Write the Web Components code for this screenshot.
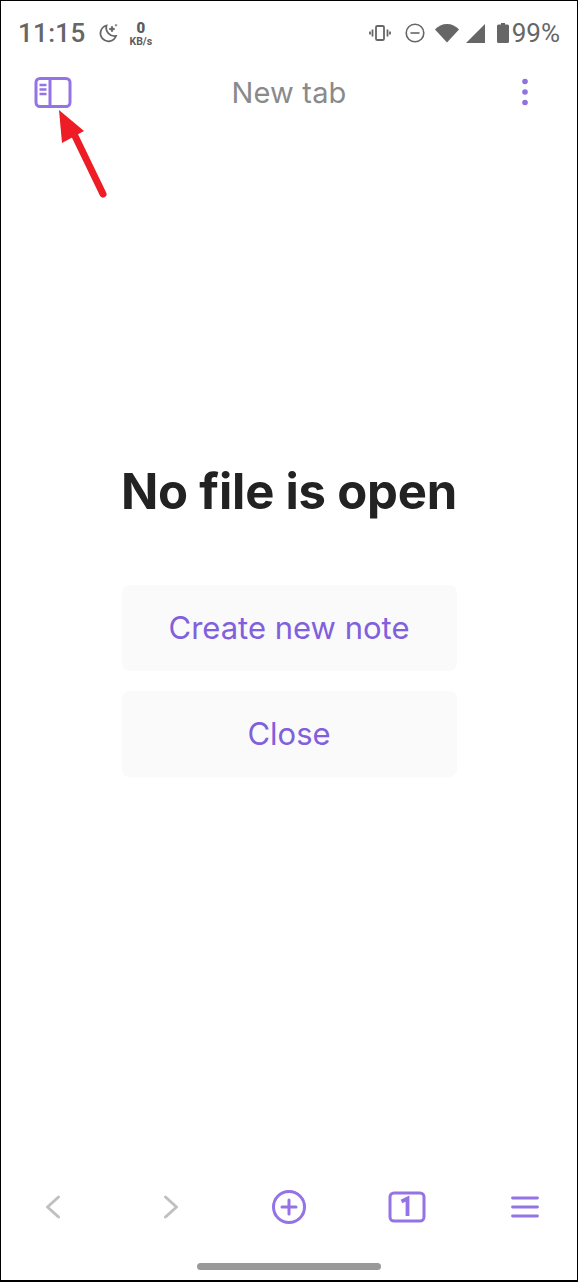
<!DOCTYPE html>
<html lang="en">
<head>
<meta charset="utf-8">
<title>New tab</title>
<style>
    html, body { margin: 0; padding: 0; background: #fff; }
    body { font-family: "Inter", "Liberation Sans", sans-serif; }
</style>
</head>
<body>
<app-shell>
    <status-bar slot="status"></status-bar>
    <top-bar slot="top" title="New tab"></top-bar>
    <empty-state slot="main" heading="No file is open">
        <action-button>Create new note</action-button>
        <action-button>Close</action-button>
    </empty-state>
    <bottom-bar slot="bottom"></bottom-bar>
    <home-indicator slot="home"></home-indicator>
    <red-arrow slot="overlay"></red-arrow>
</app-shell>

<script>
class AppShell extends HTMLElement {
    constructor() {
        super();
        this.attachShadow({ mode: 'open' });
        this.shadowRoot.innerHTML = `
            <style>
                :host { display: block; position: relative; width: 578px; height: 1282px; box-sizing: border-box; border: solid #000; border-width: 1px 1px 2px 1px; overflow: hidden; background: #fff; }
                .col { display: flex; flex-direction: column; height: 100%; }
                .grow { flex: 1; min-height: 0; }
            </style>
            <div class="col">
                <slot name="status"></slot>
                <slot name="top"></slot>
                <div class="grow"><slot name="main"></slot></div>
                <slot name="bottom"></slot>
                <slot name="home"></slot>
            </div>
            <slot name="overlay"></slot>
        `;
    }
}

class StatusBar extends HTMLElement {
    constructor() {
        super();
        this.attachShadow({ mode: 'open' });
        this.shadowRoot.innerHTML = `
            <style>
                :host { display: flex; align-items: center; justify-content: space-between; height: 64px; padding: 0 17px 0 17px; color: #666; font-family: "Roboto", sans-serif; }
                .side { display: flex; align-items: center; }
                .time { font-size: 26px; font-weight: 500; letter-spacing: .3px; margin-right: 13px; }
                .speed { display: flex; flex-direction: column; align-items: center; margin-left: 11px; font-weight: 700; color: #5c5c5c; }
                .speed b { font-size: 15px; line-height: 18px; }
                .speed span { font-size: 10.500px; line-height: 12px; margin-top: -1px; }
                .pct { font-size: 26px; }
                svg { display: block; }
            </style>
            <div class="side">
                <span class="time">11:15</span>
                <svg width="20" height="20" viewBox="0 0 20 20" fill="none" stroke="#666" stroke-width="1.800">
                    <path d="M8.500 2.500a8 8 0 1 0 9.500 10.500A8.500 8.500 0 0 1 8.500 2.500z"/>
                    <path d="M14 3l.9 2.100L17 6l-2.100.9L14 9l-.9-2.100L11 6l2.100-.9zM18 1v2.500M16.800 2.200h2.400" fill="#666" stroke-width=".8"/>
                </svg>
                <div class="speed"><b>0</b><span>KB/s</span></div>
            </div>
            <div class="side">
                <svg width="22" height="18" viewBox="0 0 22 18" fill="none" stroke="#666" stroke-width="1.800" style="margin-right:14px">
                    <rect x="7" y="2" width="8" height="14" rx="1.300"/>
                    <path d="M3.500 5.500v7M18.500 5.500v7M1 7.500v3M21 7.500v3"/>
                </svg>
                <svg width="20" height="20" viewBox="0 0 20 20" fill="none" stroke="#666" stroke-width="1.600" style="margin-right:10px">
                    <circle cx="10" cy="10" r="8.800"/>
                    <path d="M5.500 10h9"/>
                </svg>
                <svg width="24" height="20" viewBox="0 0 24 20" fill="#666" style="margin-right:7px">
                    <path d="M0 6.500C3 3 7.500 1 12 1s9 2 12 5.500L12 19.500z"/>
                </svg>
                <svg width="20" height="20" viewBox="0 0 20 20" fill="#666" style="margin-right:11px">
                    <path d="M19 1v19H0z"/>
                </svg>
                <svg width="12" height="20" viewBox="0 0 12 20" fill="#666" style="margin-right:3px">
                    <path d="M4 0h4v1.500h2.500a1.500 1.500 0 0 1 1.500 1.500v15.500a1.500 1.500 0 0 1-1.500 1.500h-9A1.500 1.500 0 0 1 0 18.500V3a1.500 1.500 0 0 1 1.500-1.500H4z"/>
                </svg>
                <span class="pct">99%</span>
            </div>
        `;
    }
}

class TopBar extends HTMLElement {
    constructor() {
        super();
        this.attachShadow({ mode: 'open' });
    }

    connectedCallback() {
        const title = this.getAttribute('title') || '';
        this.removeAttribute('title');
        this.shadowRoot.innerHTML = `
            <style>
                :host { display: grid; grid-template-columns: 1fr auto 1fr; align-items: center; height: 54px; padding: 0 33px; color: #8a8a8a; }
                .title { font-size: 29px; font-family: "Inter", sans-serif; letter-spacing: .2px; }
                svg { display: block; }
                svg:last-child { justify-self: end; margin-right: 15px; }
            </style>
            <svg width="38" height="31" viewBox="0 0 38 31" fill="none" stroke="#9473e6" stroke-width="3">
                <rect x="2" y="1.500" width="34" height="28" rx="4"/>
                <path d="M16 1.500v28"/>
                <path d="M5.500 8h7M5.500 12.500h7M5.500 17h7" stroke-width="2.600"/>
            </svg>
            <span class="title">${title}</span>
            <svg width="8" height="28" viewBox="0 0 8 28" fill="#8f73dd">
                <circle cx="4" cy="3.500" r="2.800"/>
                <circle cx="4" cy="14" r="2.800"/>
                <circle cx="4" cy="24.500" r="2.800"/>
            </svg>
        `;
    }
}

class EmptyState extends HTMLElement {
    constructor() {
        super();
        this.attachShadow({ mode: 'open' });
    }

    connectedCallback() {
        this.shadowRoot.innerHTML = `
            <style>
                :host { display: flex; flex-direction: column; align-items: center; padding-top: 341px; }
                h1 { margin: 0 0 61px; font-size: 49px; line-height: 64px; font-weight: 700; color: #222; letter-spacing: -.2px; }
                .actions { display: flex; flex-direction: column; gap: 20px; width: 335px; }
            </style>
            <h1>${this.getAttribute('heading')}</h1>
            <div class="actions"><slot></slot></div>
        `;
    }
}

class ActionButton extends HTMLElement {
    constructor() {
        super();
        this.attachShadow({ mode: 'open' });
        this.shadowRoot.innerHTML = `
            <style>
                :host { display: flex; align-items: center; justify-content: center; box-sizing: border-box; height: 86px; padding-bottom: 2px; border-radius: 8px; background: #fafafa; color: #8060dd; font-size: 31px; }
            </style>
            <slot></slot>
        `;
    }
}

class BottomBar extends HTMLElement {
    constructor() {
        super();
        this.attachShadow({ mode: 'open' });
        this.shadowRoot.innerHTML = `
            <style>
                :host { display: grid; grid-template-columns: repeat(5, 118px); justify-content: center; align-items: center; height: 54px; }
                svg { display: block; justify-self: center; }
            </style>
            <svg width="16" height="24" viewBox="0 0 16 24" fill="none" stroke="#c0c0c0" stroke-width="3" stroke-linecap="round" stroke-linejoin="round">
                <path d="M13.500 2 2.500 12l11 10"/>
            </svg>
            <svg width="16" height="24" viewBox="0 0 16 24" fill="none" stroke="#c0c0c0" stroke-width="3" stroke-linecap="round" stroke-linejoin="round">
                <path d="m2.500 2 11 10-11 10"/>
            </svg>
            <svg width="36" height="36" viewBox="0 0 36 36" fill="none" stroke="#9473e6" stroke-width="3" stroke-linecap="round">
                <circle cx="18" cy="18" r="15.500"/>
                <path d="M18 11v14M11 18h14"/>
            </svg>
            <svg width="38" height="32" viewBox="0 0 38 32" fill="none" stroke="#9473e6" stroke-width="3">
                <rect x="2" y="2" width="34" height="28" rx="4"/>
                <path d="M13.500 10.500l6-3V25" stroke-width="3.800"/>
            </svg>
            <svg width="28" height="22" viewBox="0 0 28 22" fill="none" stroke="#9473e6" stroke-width="2.800" stroke-linecap="round">
                <path d="M1.500 2h25M1.500 11h25M1.500 20h25"/>
            </svg>
        `;
    }
}

class HomeIndicator extends HTMLElement {
    constructor() {
        super();
        this.attachShadow({ mode: 'open' });
        this.shadowRoot.innerHTML = `
            <style>
                :host { display: flex; justify-content: center; height: 46px; padding-top: 29px; box-sizing: border-box; }
                div { width: 184px; height: 7px; border-radius: 4px; background: #999; }
            </style>
            <div></div>
        `;
    }
}

// annotation drawn over the screenshot
class RedArrow extends HTMLElement {
    constructor() {
        super();
        this.attachShadow({ mode: 'open' });
        this.shadowRoot.innerHTML = `
            <style>
                :host { display: block; position: absolute; left: 50px; top: 100px; width: 70px; height: 100px; }
            </style>
            <svg width="70" height="100" viewBox="0 0 70 100">
                <path d="M8 9 33 30 11 42z" fill="#ee1c25"/>
                <path d="M24 35 52 93" stroke="#ee1c25" stroke-width="7" stroke-linecap="round"/>
            </svg>
        `;
    }
}

customElements.define('app-shell', AppShell);
customElements.define('status-bar', StatusBar);
customElements.define('top-bar', TopBar);
customElements.define('empty-state', EmptyState);
customElements.define('action-button', ActionButton);
customElements.define('bottom-bar', BottomBar);
customElements.define('home-indicator', HomeIndicator);
customElements.define('red-arrow', RedArrow);
</script>
</body>
</html>
